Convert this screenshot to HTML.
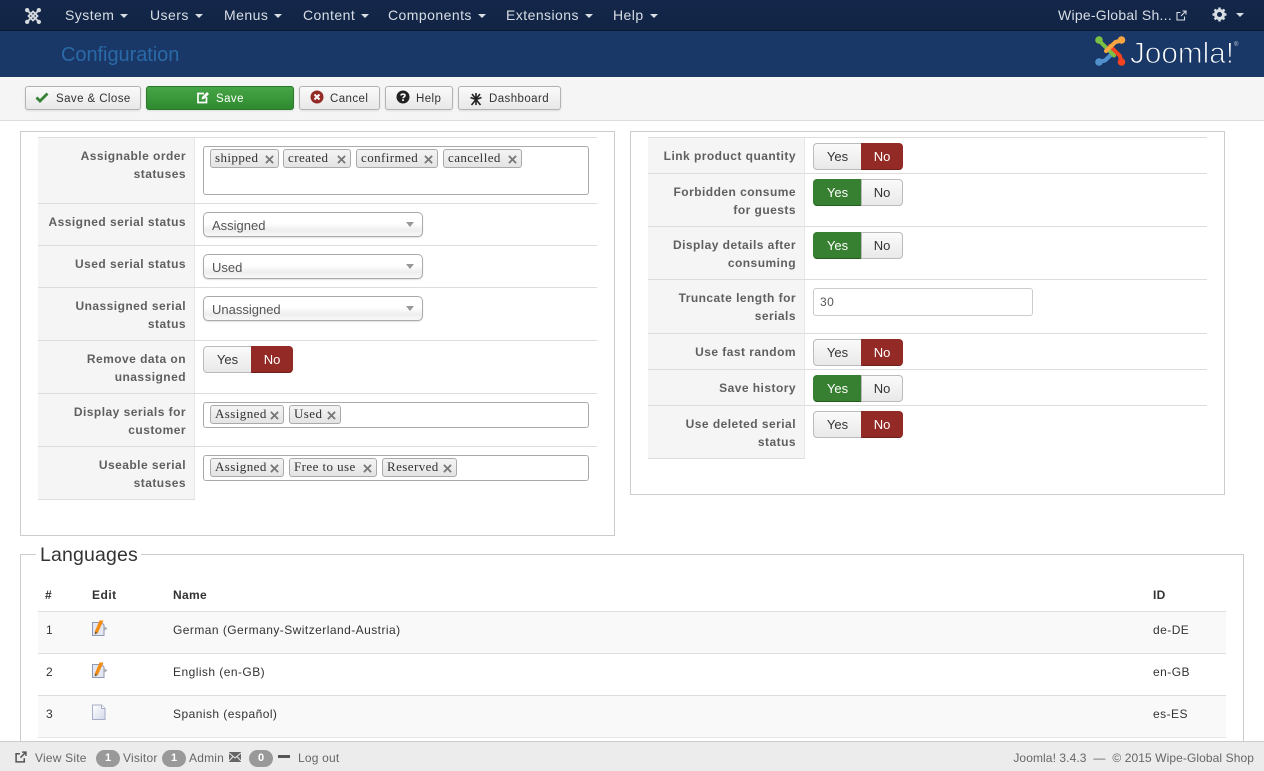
<!DOCTYPE html>
<html><head><meta charset="utf-8"><title>Configuration</title>
<style>
html,body{margin:0;padding:0;width:1264px;height:771px;overflow:hidden}
body{position:relative;background:#fff;font-family:"Liberation Sans",sans-serif;font-size:13px;color:#333}
div,span,svg{position:absolute;box-sizing:border-box}
.t{white-space:nowrap}
.n{top:6px;color:#d8dde4;font-size:14px;line-height:18px;white-space:nowrap;letter-spacing:.45px}
.c{display:inline-block;position:static;width:0;height:0;border:4px solid transparent;border-top-color:#d8dde4;border-bottom:0;margin-left:6px;vertical-align:2px}
.b{top:86px;height:24px;border:1px solid #b3b3b3;border-radius:3px;background:linear-gradient(#fafafa,#e8e8e8);box-shadow:0 1px 2px rgba(0,0,0,.1)}
.bt{top:92px;font-size:11.5px;line-height:14px;letter-spacing:.42px;color:#333;white-space:nowrap}
.fs{border:1px solid #ccc}
.l{background:#f5f5f5;border-right:1px solid #e8e8e8}
.h{height:1px;background:#ddd}
.lb{font-weight:bold;font-size:12px;letter-spacing:.46px;line-height:18px;color:#5f5f5f;text-align:right;white-space:nowrap}
.mb{left:203px;width:386px;background:#fff;border:1px solid #aaa;border-radius:3px}
.tag{height:19px;border:1px solid #aaa;border-radius:3px;background:linear-gradient(#f4f4f4,#e4e4e4);font-family:"Liberation Serif",serif;font-size:13px;line-height:16px;color:#333;padding-left:4px;white-space:nowrap;letter-spacing:.42px}
.x{right:4px;top:5px;width:9px;height:9px}
.sel{left:203px;width:220px;height:25px;border:1px solid #aaa;border-radius:5px;background:linear-gradient(#fff 45%,#eee 75%,#f8f8f8);box-shadow:0 1px 1px rgba(0,0,0,.12);font-size:13px;line-height:25px;padding-left:8px;color:#555}
.ar{right:8px;top:9px;width:0;height:0;border:4px solid transparent;border-top:5px solid #999;border-bottom:0}
.tg{width:90px;height:27px}
.y,.o{top:0;height:27px;font-size:13px;line-height:26px;text-align:center;border:1px solid #bbb;background:linear-gradient(#fafafa,#e9e9e9);color:#333}
.y{left:0;width:49px;border-radius:4px 0 0 4px}
.o{left:48px;width:42px;border-radius:0 4px 4px 0}
.red{background:#942a25;border-color:#942a25;border-bottom-color:#6d1f1b;color:#fff}
.grn{background:#377f31;border-color:#377f31;border-bottom-color:#255a21;color:#fff}
.sv{font-size:12px;line-height:18px;color:#333;white-space:nowrap;letter-spacing:.45px}
.f{top:751px;color:#666;font-size:12px;line-height:14px;white-space:nowrap;letter-spacing:.2px}
.bd{top:750px;height:17px;width:24px;border-radius:9px;background:#999;color:#fff;font-size:11px;font-weight:bold;line-height:17px;text-align:center}
.th{top:588px;font-weight:bold;font-size:12px;line-height:15px;letter-spacing:.35px;white-space:nowrap}
</style></head><body>

<div style="left:0;top:0;width:1264px;height:31px;background:linear-gradient(#14274a,#112444);border-bottom:1px solid #0b1a33"></div>
<svg style="left:24px;top:7px" width="18" height="18" viewBox="0 0 20 20"><g fill="none" stroke="#d6d9de" stroke-width="2"><path d="M3 3L17 17M17 3L3 17M10 5L15 10L10 15L5 10Z"/></g><g fill="#d6d9de"><circle cx="3.5" cy="3.5" r="2.4"/><circle cx="16.5" cy="3.5" r="2.4"/><circle cx="3.5" cy="16.5" r="2.4"/><circle cx="16.5" cy="16.5" r="2.4"/></g></svg>
<div class="n" style="left:65px">System<i class="c"></i></div>
<div class="n" style="left:150px">Users<i class="c"></i></div>
<div class="n" style="left:224px">Menus<i class="c"></i></div>
<div class="n" style="left:303px">Content<i class="c"></i></div>
<div class="n" style="left:388px">Components<i class="c"></i></div>
<div class="n" style="left:506px">Extensions<i class="c"></i></div>
<div class="n" style="left:613px">Help<i class="c"></i></div>
<div class="n" style="left:1058px;letter-spacing:.25px">Wipe-Global Sh...</div>
<svg style="left:1176px;top:10px" width="11" height="11" viewBox="0 0 11 11"><path d="M8.500 6.500V10H1V2.500H4.500M5 6L9.500 1.500M6.500 1H10V4.500" fill="none" stroke="#d8dde4" stroke-width="1.100"/></svg>
<svg style="left:1212px;top:7px" width="15" height="15" viewBox="0 0 15 15"><circle cx="7.500" cy="7.500" r="4" fill="none" stroke="#d8dde4" stroke-width="3"/><path d="M7.500 .5V14.500M.5 7.500H14.500M2.500 2.500L12.500 12.500M12.500 2.500L2.500 12.500" stroke="#d8dde4" stroke-width="2.500" stroke-dasharray="2.500 9 2.500"/></svg>
<div style="left:1236px;top:13px;border:4px solid transparent;border-top:4px solid #d8dde4;border-bottom:0;width:0;height:0"></div>

<div style="left:0;top:31px;width:1264px;height:46px;background:#1a3867"></div>
<div class="t" style="left:61px;top:43px;font-size:20px;line-height:24px;color:#2a69a8;letter-spacing:-.05px">Configuration</div>
<svg style="left:1095px;top:35px" width="31" height="32" viewBox="0 0 31 32"><g fill="none" stroke-width="4" stroke-linecap="round" stroke-linejoin="round"><path stroke="#5091cd" d="M4 27L10 25.500L19 17"/><path stroke="#f44321" d="M26.500 27L25 21L15 11"/><path stroke="#7ac143" d="M4 5.500L10 11.500L19 20.500"/><path stroke="#f9a541" d="M26.500 5.500L20.500 7L11 16"/></g><circle cx="4" cy="5" r="3.800" fill="#7ac143"/><circle cx="26.500" cy="5" r="3.800" fill="#f9a541"/><circle cx="4" cy="27" r="3.800" fill="#5091cd"/><circle cx="26.500" cy="27" r="3.800" fill="#f44321"/></svg>
<svg style="left:1128px;top:34px" width="114" height="34" viewBox="0 0 114 34"><text x="2" y="29" font-family="Liberation Sans" font-size="30" textLength="104" lengthAdjust="spacingAndGlyphs" fill="#fff" stroke="#1a3867" stroke-width="1">Joomla!</text><text x="106" y="12" font-family="Liberation Sans" font-size="6" fill="#c7d0dc">®</text></svg>

<div style="left:0;top:77px;width:1264px;height:44px;background:#f5f5f5;border-bottom:1px solid #ddd"></div>
<div class="b" style="left:25px;width:116px"></div>
<svg style="left:35px;top:91px" width="14" height="13" viewBox="0 0 14 13"><path d="M1.500 6.500L5 10L12.500 2.500" fill="none" stroke="#378137" stroke-width="2.800"/></svg>
<div class="bt" style="left:56px">Save &amp; Close</div>
<div class="b" style="left:146px;width:148px;background:linear-gradient(#46a546,#2f8a2f);border-color:#2a7a2a"></div>
<svg style="left:196px;top:91px" width="14" height="13" viewBox="0 0 14 13"><path d="M8 2.500H2V11.500H10.500V6" fill="none" stroke="#fff" stroke-width="1.700"/><path d="M5.500 8.500L6 6L11 1L13 3L8 8Z" fill="#fff"/></svg>
<div class="bt" style="left:216px;color:#fff">Save</div>
<div class="b" style="left:299px;width:81px"></div>
<svg style="left:310px;top:90px" width="14" height="14" viewBox="0 0 14 14"><circle cx="7" cy="7" r="6.500" fill="#942a25"/><path d="M4.500 4.500L9.500 9.500M9.500 4.500L4.500 9.500" stroke="#fff" stroke-width="2"/></svg>
<div class="bt" style="left:330px">Cancel</div>
<div class="b" style="left:385px;width:68px"></div>
<svg style="left:396px;top:90px" width="14" height="14" viewBox="0 0 14 14"><circle cx="7" cy="7" r="6.500" fill="#222"/><path d="M5 5.500C5 3.700 9 3.700 9 5.500C9 7 7 6.800 7 8.300" fill="none" stroke="#fff" stroke-width="1.600"/><rect x="6.100" y="9.300" width="1.800" height="1.700" fill="#fff"/></svg>
<div class="bt" style="left:416px">Help</div>
<div class="b" style="left:458px;width:103px"></div>
<svg style="left:469px;top:92px" width="14" height="14" viewBox="0 0 14 14"><path d="M7 1V13M1.500 5.500L7 7.500L12.500 5.500M2.500 13L7 7.500L11.500 13M3 2L7 7L11 2" fill="none" stroke="#222" stroke-width="1.600"/></svg>
<div class="bt" style="left:489px">Dashboard</div>

<div class="fs" style="left:20px;top:131px;width:595px;height:405px"></div>
<div class="l" style="left:38px;top:137px;width:157px;height:363px"></div>
<div class="h" style="left:38px;top:137px;width:559px"></div>
<div class="h" style="left:38px;top:203px;width:559px"></div>
<div class="h" style="left:38px;top:245px;width:559px"></div>
<div class="h" style="left:38px;top:287px;width:559px"></div>
<div class="h" style="left:38px;top:340px;width:559px"></div>
<div class="h" style="left:38px;top:393px;width:559px"></div>
<div class="h" style="left:38px;top:446px;width:559px"></div>
<div class="h" style="left:38px;top:499px;width:157px"></div>

<div class="lb" style="right:1078px;top:147px">Assignable order<br>statuses</div>
<div class="lb" style="right:1078px;top:213px">Assigned serial status</div>
<div class="lb" style="right:1078px;top:255px">Used serial status</div>
<div class="lb" style="right:1078px;top:297px">Unassigned serial<br>status</div>
<div class="lb" style="right:1078px;top:350px">Remove data on<br>unassigned</div>
<div class="lb" style="right:1078px;top:403px">Display serials for<br>customer</div>
<div class="lb" style="right:1078px;top:456px">Useable serial<br>statuses</div>

<div class="mb" style="top:146px;height:49px"></div>
<div class="tag" style="left:210px;top:149px;width:69px">shipped<svg class="x" viewBox="0 0 10 10"><path d="M1 1L9 9M9 1L1 9" stroke="#777" stroke-width="2"/></svg></div>
<div class="tag" style="left:283px;top:149px;width:68px">created<svg class="x" viewBox="0 0 10 10"><path d="M1 1L9 9M9 1L1 9" stroke="#777" stroke-width="2"/></svg></div>
<div class="tag" style="left:356px;top:149px;width:82px">confirmed<svg class="x" viewBox="0 0 10 10"><path d="M1 1L9 9M9 1L1 9" stroke="#777" stroke-width="2"/></svg></div>
<div class="tag" style="left:443px;top:149px;width:79px">cancelled<svg class="x" viewBox="0 0 10 10"><path d="M1 1L9 9M9 1L1 9" stroke="#777" stroke-width="2"/></svg></div>

<div class="sel" style="top:212px">Assigned<i class="ar" style="position:absolute"></i></div>
<div class="sel" style="top:254px">Used<i class="ar" style="position:absolute"></i></div>
<div class="sel" style="top:296px">Unassigned<i class="ar" style="position:absolute"></i></div>

<div class="tg" style="left:203px;top:346px"><div class="y">Yes</div><div class="o red">No</div></div>

<div class="mb" style="top:402px;height:26px"></div>
<div class="tag" style="left:210px;top:405px;width:74px">Assigned<svg class="x" viewBox="0 0 10 10"><path d="M1 1L9 9M9 1L1 9" stroke="#777" stroke-width="2"/></svg></div>
<div class="tag" style="left:289px;top:405px;width:52px">Used<svg class="x" viewBox="0 0 10 10"><path d="M1 1L9 9M9 1L1 9" stroke="#777" stroke-width="2"/></svg></div>
<div class="mb" style="top:455px;height:26px"></div>
<div class="tag" style="left:210px;top:458px;width:74px">Assigned<svg class="x" viewBox="0 0 10 10"><path d="M1 1L9 9M9 1L1 9" stroke="#777" stroke-width="2"/></svg></div>
<div class="tag" style="left:289px;top:458px;width:88px">Free to use<svg class="x" viewBox="0 0 10 10"><path d="M1 1L9 9M9 1L1 9" stroke="#777" stroke-width="2"/></svg></div>
<div class="tag" style="left:382px;top:458px;width:75px">Reserved<svg class="x" viewBox="0 0 10 10"><path d="M1 1L9 9M9 1L1 9" stroke="#777" stroke-width="2"/></svg></div>

<div class="fs" style="left:630px;top:131px;width:595px;height:364px"></div>
<div class="l" style="left:648px;top:137px;width:157px;height:322px"></div>
<div class="h" style="left:648px;top:137px;width:559px"></div>
<div class="h" style="left:648px;top:173px;width:559px"></div>
<div class="h" style="left:648px;top:226px;width:559px"></div>
<div class="h" style="left:648px;top:279px;width:559px"></div>
<div class="h" style="left:648px;top:333px;width:559px"></div>
<div class="h" style="left:648px;top:369px;width:559px"></div>
<div class="h" style="left:648px;top:405px;width:559px"></div>
<div class="h" style="left:648px;top:458px;width:157px"></div>

<div class="lb" style="right:468px;top:147px">Link product quantity</div>
<div class="lb" style="right:468px;top:183px">Forbidden consume<br>for guests</div>
<div class="lb" style="right:468px;top:236px">Display details after<br>consuming</div>
<div class="lb" style="right:468px;top:289px">Truncate length for<br>serials</div>
<div class="lb" style="right:468px;top:343px">Use fast random</div>
<div class="lb" style="right:468px;top:379px">Save history</div>
<div class="lb" style="right:468px;top:415px">Use deleted serial<br>status</div>

<div class="tg" style="left:813px;top:143px"><div class="y">Yes</div><div class="o red">No</div></div>
<div class="tg" style="left:813px;top:179px"><div class="y grn">Yes</div><div class="o">No</div></div>
<div class="tg" style="left:813px;top:232px"><div class="y grn">Yes</div><div class="o">No</div></div>
<div style="left:813px;top:288px;width:220px;height:28px;border:1px solid #ccc;border-radius:3px;font-size:12px;line-height:26px;padding-left:6px;color:#555;letter-spacing:.5px">30</div>
<div class="tg" style="left:813px;top:339px"><div class="y">Yes</div><div class="o red">No</div></div>
<div class="tg" style="left:813px;top:375px"><div class="y grn">Yes</div><div class="o">No</div></div>
<div class="tg" style="left:813px;top:411px"><div class="y">Yes</div><div class="o red">No</div></div>

<div class="fs" style="left:20px;top:554px;width:1224px;height:187px;border-bottom:0"></div>
<div class="t" style="left:36px;top:544px;padding:0 3px 0 4px;background:#fff;font-size:19.500px;line-height:22px;color:#333;letter-spacing:.15px">Languages</div>

<div class="th" style="left:45px">#</div>
<div class="th" style="left:92px;letter-spacing:.5px">Edit</div>
<div class="th" style="left:173px">Name</div>
<div class="th" style="left:1153px">ID</div>

<div style="left:38px;top:612px;width:1188px;height:41px;background:#f9f9f9"></div>
<div style="left:38px;top:696px;width:1188px;height:41px;background:#f9f9f9"></div>
<div class="h" style="left:38px;top:611px;width:1188px"></div>
<div class="h" style="left:38px;top:653px;width:1188px"></div>
<div class="h" style="left:38px;top:695px;width:1188px"></div>
<div class="h" style="left:38px;top:737px;width:1188px;background:#e8e8e8"></div>

<div class="sv" style="left:46px;top:621px">1</div>
<div class="sv" style="left:173px;top:621px">German (Germany-Switzerland-Austria)</div>
<div class="sv" style="left:1153px;top:621px">de-DE</div>
<div class="sv" style="left:46px;top:663px">2</div>
<div class="sv" style="left:173px;top:663px">English (en-GB)</div>
<div class="sv" style="left:1153px;top:663px">en-GB</div>
<div class="sv" style="left:46px;top:705px">3</div>
<div class="sv" style="left:173px;top:705px">Spanish (español)</div>
<div class="sv" style="left:1153px;top:705px">es-ES</div>

<svg style="left:92px;top:620px" width="16" height="16" viewBox="0 0 16 16"><path d="M.5 2.500H9.500L12 5V15.500H.5Z" fill="#e4e7ef" stroke="#8f99b5"/><path d="M12 6L15.500 8.500L12 11Z" fill="#a9aeb5"/><path d="M2.800 11.500L7.500 .5H11.500L5.800 13Z" fill="#f28c14"/><path d="M2.800 11.500L2.800 14.500L5.800 13Z" fill="#7a5a30"/></svg>
<svg style="left:92px;top:662px" width="16" height="16" viewBox="0 0 16 16"><path d="M.5 2.500H9.500L12 5V15.500H.5Z" fill="#e4e7ef" stroke="#8f99b5"/><path d="M12 6L15.500 8.500L12 11Z" fill="#a9aeb5"/><path d="M2.800 11.500L7.500 .5H11.500L5.800 13Z" fill="#f28c14"/><path d="M2.800 11.500L2.800 14.500L5.800 13Z" fill="#7a5a30"/></svg>
<svg style="left:92px;top:704px" width="14" height="16" viewBox="0 0 14 16"><defs><linearGradient id="pg" x1="0" y1="0" x2="1" y2="1"><stop offset="0" stop-color="#fff"/><stop offset="1" stop-color="#d5daea"/></linearGradient></defs><path d="M.5 1H9.500L13 4.500V15.500H.5Z" fill="url(#pg)" stroke="#a6aec6"/><path d="M9.500 1V4.500H13" fill="#fff" stroke="#a6aec6"/></svg>

<div style="left:0;top:741px;width:1264px;height:30px;background:#ececec;border-top:1px solid #ccc"></div>
<svg style="left:15px;top:751px" width="12" height="12" viewBox="0 0 11 11"><path d="M8.500 6.500V10H1V2.500H4.500M5 6L9.500 1.500M6.500 1H10V4.500" fill="none" stroke="#555" stroke-width="1.400"/></svg>
<div class="f" style="left:35px">View Site</div>
<div class="bd" style="left:96px">1</div>
<div class="f" style="left:123px">Visitor</div>
<div class="bd" style="left:162px">1</div>
<div class="f" style="left:189px">Admin</div>
<svg style="left:229px;top:752px" width="12" height="10" viewBox="0 0 12 10"><rect width="12" height="10" fill="#666"/><path d="M0 1L6 6L12 1M0 9L4 4.500M12 9L8 4.500" fill="none" stroke="#ececec"/></svg>
<div class="bd" style="left:249px">0</div>
<div style="left:278px;top:755px;width:12px;height:3px;background:#555"></div>
<div class="f" style="left:298px">Log out</div>
<div class="f" style="right:10px;letter-spacing:.09px">Joomla! 3.4.3 &nbsp;— &nbsp;© 2015 Wipe-Global Shop</div>
</body></html>
